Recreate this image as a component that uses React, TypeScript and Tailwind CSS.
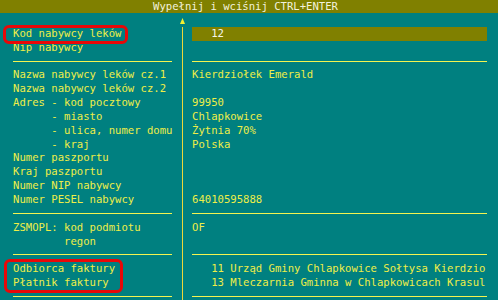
const left: (string | null)[] = [
  'Kod nabywcy leków',
  'Nip nabywcy',
  null,
  'Nazwa nabywcy leków cz.1',
  'Nazwa nabywcy leków cz.2',
  'Adres - kod pocztowy',
  '      - miasto',
  '      - ulica, numer domu',
  '      - kraj',
  'Numer paszportu',
  'Kraj paszportu',
  'Numer NIP nabywcy',
  'Numer PESEL nabywcy',
  null,
  'ZSMOPL: kod podmiotu',
  '        regon',
  null,
  'Odbiorca faktury',
  'Płatnik faktury',
  null,
]

const right: (string | null)[] = [
  '   12',
  '',
  null,
  'Kierdziołek Emerald',
  '',
  '99950',
  'Chlapkowice',
  'Żytnia 70%',
  'Polska',
  '',
  '',
  '',
  '64010595888',
  null,
  'OF',
  '',
  null,
  '   11 Urząd Gminy Chlapkowice Sołtysa Kierdzio',
  '   13 Mleczarnia Gminna w Chlapkowicach Krasul',
  null,
]

const Separator = () => (
  <div className="h-[13.85px] pt-[6px]">
    <div className="h-px bg-[#f4f450]" />
  </div>
)

const App = () => {
  return (
    <div className="relative w-[498px] h-[300px] overflow-hidden bg-[#008080] text-[#eeee48] font-['DejaVu_Sans_Mono',monospace] text-[10.6px] leading-[13.85px]">
      <div className="h-[13px] bg-[#808000] pl-[153px] leading-[13px] text-[#f2f2dc] whitespace-pre">
        Wypełnij i wciśnij CTRL+ENTER
      </div>

      <div className="flex">
        <div className="w-[172px] pl-[13px] flex flex-col">
          <div className="h-[13.85px]" />
          {left.map((t, i) =>
            t === null ? (
              <Separator key={i} />
            ) : (
              <div key={i} className="h-[13.85px] whitespace-pre">
                {t}
              </div>
            )
          )}
        </div>

        <div className="w-[20px] pl-[8px] flex flex-col">
          <div className="h-[13.85px] pt-[5px]">
            <svg width="5" height="6" viewBox="0 0 5 6">
              <polygon points="2.5,0 5,6 0,6" fill="#f4f030" />
            </svg>
          </div>
          <div className="ml-[2px] w-px flex-1 bg-[#ecd83a]" />
        </div>

        <div className="w-[295px] flex flex-col">
          <div className="h-[13.85px]" />
          {right.map((t, i) =>
            t === null ? (
              <Separator key={i} />
            ) : i === 0 ? (
              <div key={i} className="h-[13.85px] bg-[#808000] text-[#f6f6ea] whitespace-pre">
                {t}
              </div>
            ) : (
              <div key={i} className="h-[13.85px] whitespace-pre overflow-hidden">
                {t}
              </div>
            )
          )}
        </div>
      </div>

      <div className="absolute left-[3px] top-[25px] w-[125px] h-[19px] border-[3px] border-[#e80808] rounded-[6px]" />
      <div className="absolute left-[4px] top-[259px] w-[119px] h-[34px] border-[3px] border-[#e80808] rounded-[6px]" />
    </div>
  )
}

export default App
